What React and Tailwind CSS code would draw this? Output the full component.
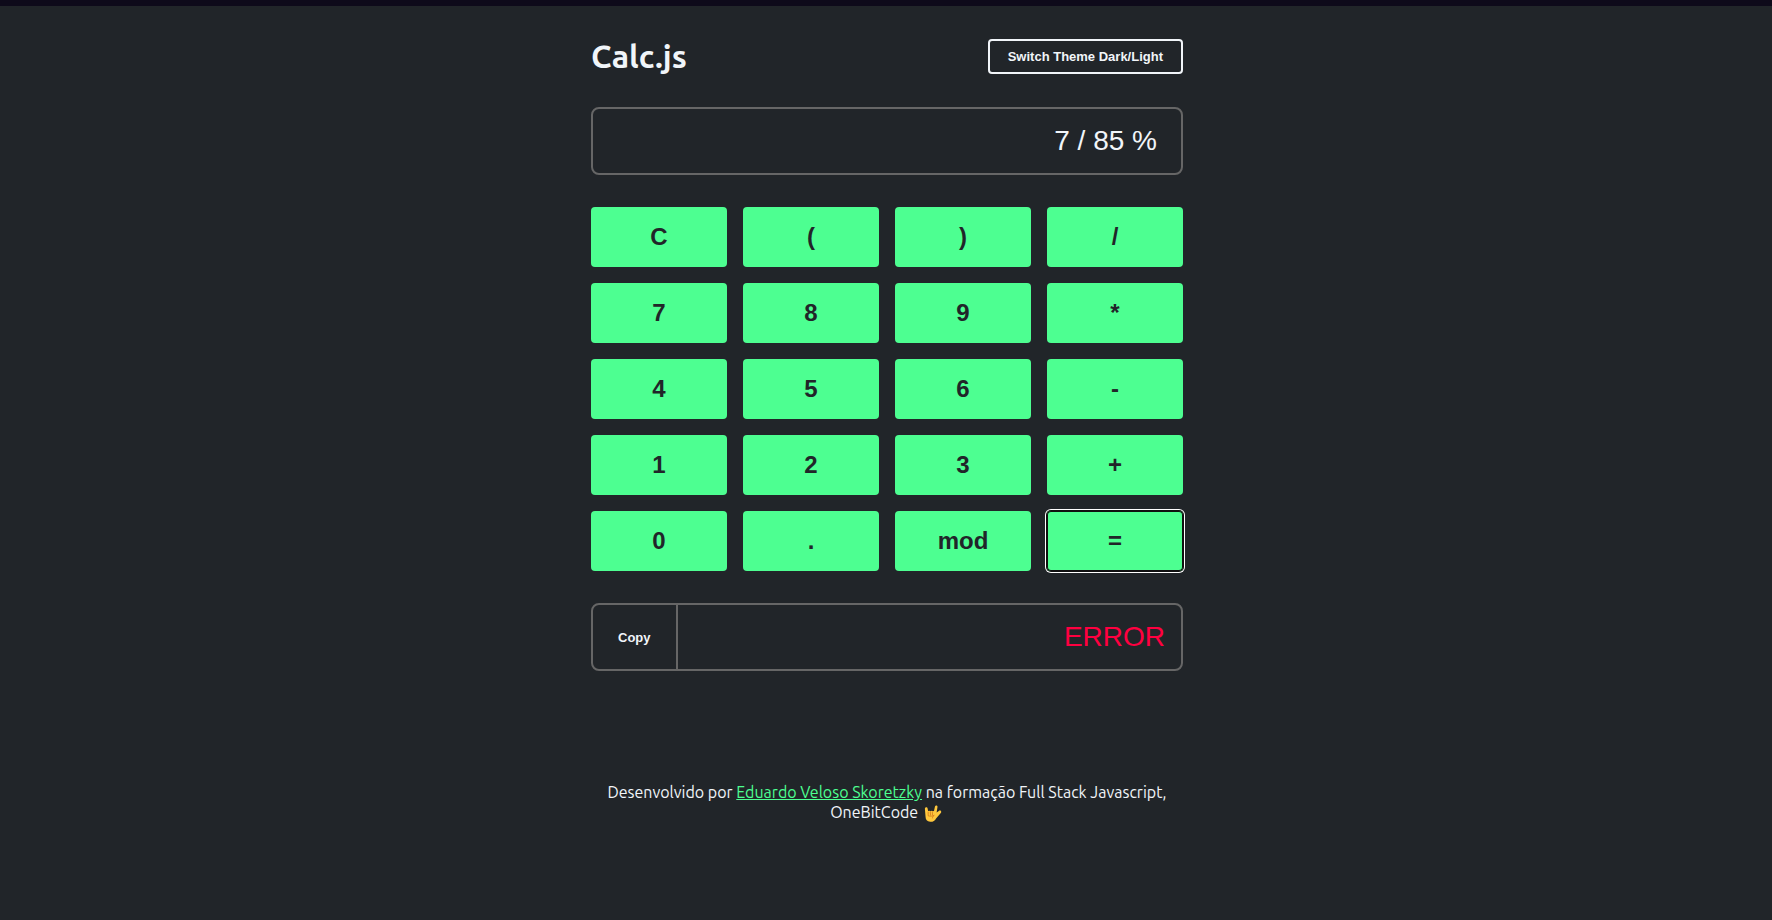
import { useState } from "react";

const KEYS = [
  "C", "(", ")", "/",
  "7", "8", "9", "*",
  "4", "5", "6", "-",
  "1", "2", "3", "+",
  "0", ".", "mod", "=",
];

const KEY_CLASS = "h-[60px] rounded bg-[#4dff91] text-2xl font-bold text-[#212529] outline-none";
const FOCUSED_KEY_CLASS = "shadow-[inset_0_0_0_1px_#101010,0_0_0_1px_#101010,0_0_0_2px_#ffffff]";

function HandIcon() {
  return (
    <svg role="img" aria-label="🤟" viewBox="-2 0 20 15.500" className="inline-block h-[17px] w-[22px] align-[-4px]">
      <path
        d="M.6 3.400c0-1.700 2.300-1.900 2.500-.2l.4 2.300 1.300-.3.6.5 1.600-.4.8.5 1.100-.3L9.800 1.300c.4-1.500 2.600-1 2.300.6l-.8 4.900 2-1.400c1.500-.9 2.900.6 1.800 1.800l-4.300 5c-1.100 2.200-3 3.300-5.400 3.100-2.900-.2-4.100-1.900-4.200-4.500z"
        fill="#ffc83d"
      />
      <path
        d="M3.600 6.400v3M5.500 6.200l.2 3M7.400 6.300l.1 2.800M3.800 9.900c1.800.5 3.500.3 5-.3M8.800 9.600c-.8.6-1.300 1.300-1.300 2.200"
        fill="none"
        stroke="#d67d1c"
        strokeWidth="0.8"
        strokeLinecap="round"
      />
    </svg>
  );
}

export default function App() {
  const [expression, setExpression] = useState("7 / 85 %");
  const [focused, setFocused] = useState("=");

  return (
    <div className="min-h-screen border-t-[6px] border-[#0e0a1a] bg-[#212529] pl-0.5 font-['Ubuntu','Noto_Sans',sans-serif] text-[#f1f5f9]">
      <main className="mx-auto flex max-w-[640px] flex-col gap-8 px-6 pt-8 pb-24">
        <header className="flex items-center justify-between">
          <h1 className="text-[32px] leading-[37px] font-bold">Calc.js</h1>
          <button
            type="button"
            className="rounded border-2 border-[#f1f5f9] px-[18px] py-2 font-['Liberation_Sans',sans-serif] text-[13px] leading-[15px] font-bold"
          >
            Switch Theme Dark/Light
          </button>
        </header>

        <input
          type="text"
          aria-label="Expression"
          value={expression}
          onChange={(e) => setExpression(e.target.value)}
          className="h-[68px] w-full rounded-lg border-2 border-[#666666] bg-transparent px-6 text-right font-['Liberation_Sans',sans-serif] text-[28px] leading-8 outline-none"
        />

        <section aria-label="Keys" className="grid grid-cols-4 gap-4 font-['Liberation_Sans',sans-serif]">
          {KEYS.map((key) => (
            <button
              key={key}
              type="button"
              onFocus={() => setFocused(key)}
              className={focused === key ? `${KEY_CLASS} ${FOCUSED_KEY_CLASS}` : KEY_CLASS}
            >
              {key}
            </button>
          ))}
        </section>

        <div className="flex h-[68px] overflow-hidden rounded-lg border-2 border-[#666666] font-['Liberation_Sans',sans-serif]">
          <button type="button" className="border-r-2 border-[#666666] px-[25px] text-[13px] leading-[15px] font-bold">
            Copy
          </button>
          <input
            type="text"
            aria-label="Result"
            readOnly
            value="ERROR"
            className="min-w-0 flex-1 bg-transparent px-4 text-right text-[28px] leading-8 text-[#ff0040] outline-none"
          />
        </div>

        <footer className="pt-[79px] text-center text-base leading-5">
          Desenvolvido por{" "}
          <a href="#autor" className="text-[#4dff91] underline">
            Eduardo Veloso Skoretzky
          </a>{" "}
          na formação Full Stack Javascript, OneBitCode <HandIcon />
        </footer>
      </main>
    </div>
  );
}
